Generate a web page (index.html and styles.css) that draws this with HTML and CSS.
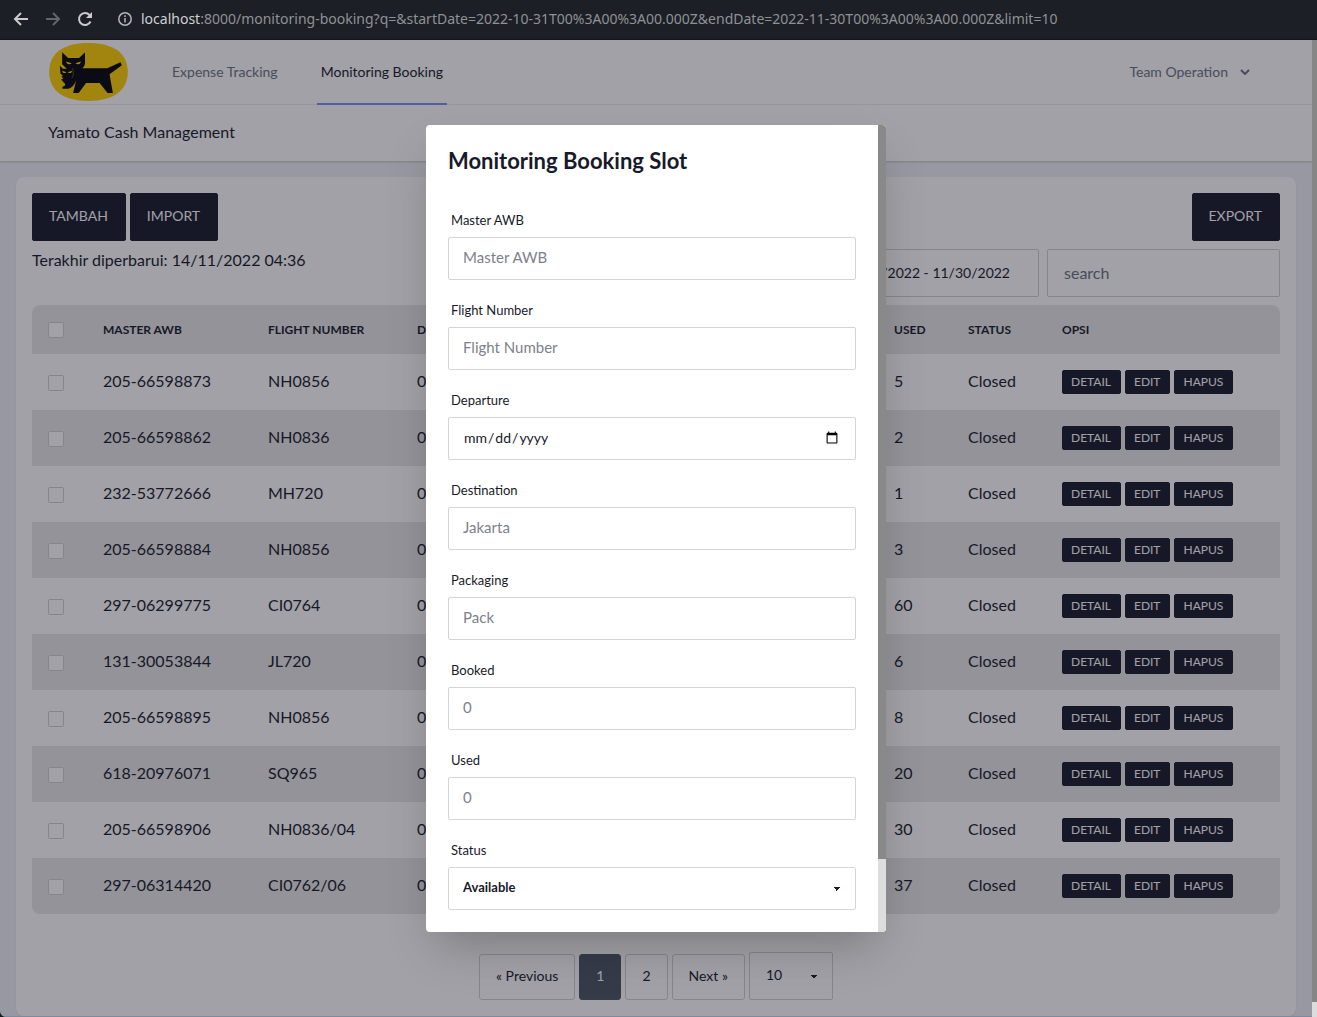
FILE: index.html
```html
<!DOCTYPE html>
<html lang="id">
<head>
<meta charset="utf-8">
<meta name="viewport" content="width=device-width, initial-scale=1">
<title>Monitoring Booking</title>
<link rel="stylesheet" href="styles.css">
</head>
<body>
<div class="browser-bar">
  <button class="browser-button" type="button" aria-label="Back"><svg width="16" height="16" viewBox="0 0 16 16"><path d="M15 8H2M8 2L2 8l6 6" fill="none" stroke="currentColor" stroke-width="2"/></svg></button>
  <button class="browser-button is-off" type="button" aria-label="Forward"><svg width="16" height="16" viewBox="0 0 16 16"><path d="M1 8h13M8 2l6 6-6 6" fill="none" stroke="currentColor" stroke-width="2"/></svg></button>
  <button class="browser-button" type="button" aria-label="Reload"><svg width="16" height="16" viewBox="0 0 16 16"><path d="M13.500 10.500A6 6 0 1 1 12.500 4" fill="none" stroke="currentColor" stroke-width="2"/><path d="M15 1v6H9z" fill="currentColor"/></svg></button>
  <div class="address">
    <svg width="14" height="14" viewBox="0 0 14 14"><circle cx="7" cy="7" r="6.200" fill="none" stroke="currentColor" stroke-width="1.500"/><path d="M7 6v4.500M7 3.300v1.600" stroke="currentColor" stroke-width="1.500"/></svg>
    <span><span class="address-host">localhost</span>:8000/monitoring-booking?q=&amp;startDate=2022-10-31T00%3A00%3A00.000Z&amp;endDate=2022-11-30T00%3A00%3A00.000Z&amp;limit=10</span>
  </div>
</div>

<div class="viewport">
  <div class="page">
    <header class="navbar">
      <a class="logo" href="#" aria-label="Yamato">
        <svg width="79" height="58" viewBox="147 128 237 175">
          <path d="M147 215C147 158 190 128 265 128S384 158 384 215S340 303 265 303S147 273 147 215Z" fill="#ffd100"/>
          <path d="M186 156L204 173H237L255 156V190Q254 201 247 204H322L362 186L366 195L329 222L339 279H323L299 249H258L236 279H219L228 242Q220 262 205 266H187V260Q196 259 195 252L183 238L190 235L184 230Q186 226 190 229L181 220L179 197L188 206H200L186 192Z" fill="#05060c"/>
          <path d="M197 184L215 189Q207 195 201 190ZM243 184L226 189Q234 195 240 190ZM186 212L199 216Q193 221 188 217ZM216 212L203 216Q209 221 214 217Z" fill="#ffd100"/>
          <path d="M218 204L220 224L215 234" fill="none" stroke="#ffd100" stroke-width="1"/>
        </svg>
      </a>
      <nav class="nav-links">
        <a class="nav-link" href="#">Expense Tracking</a>
        <a class="nav-link is-active" href="#" aria-current="page">Monitoring Booking</a>
      </nav>
      <button class="account" type="button">Team Operation
        <svg width="10" height="6" viewBox="0 0 10 6"><path d="M1 1l4 4 4-4" fill="none" stroke="currentColor" stroke-width="2"/></svg>
      </button>
    </header>
    <div class="page-heading">Yamato Cash Management</div>

    <main class="card">
      <div class="toolbar">
        <button class="button" type="button">TAMBAH</button>
        <button class="button" type="button">IMPORT</button>
        <button class="button push-right" type="button">EXPORT</button>
      </div>
      <div class="filters">
        <p class="updated">Terakhir diperbarui: 14/11/2022 04:36</p>
        <input class="filter date-range" type="text" aria-label="Date range" value="10/31/2022 - 11/30/2022">
        <input class="filter search" type="search" aria-label="Search" placeholder="search">
      </div>

      <table class="bookings">
        <colgroup><col class="col-check"><col class="col-awb"><col class="col-flight"><col><col class="col-used"><col class="col-status"><col class="col-actions"></colgroup>
        <thead>
          <tr><th><input type="checkbox" aria-label="Select all"></th><th>MASTER AWB</th><th>FLIGHT NUMBER</th><th>DEPARTURE</th><th>USED</th><th>STATUS</th><th>OPSI</th></tr>
        </thead>
        <tbody>
          <tr><td><input type="checkbox" aria-label="Select 205-66598873"></td><td>205-66598873</td><td>NH0856</td><td>0</td><td>5</td><td>Closed</td><td><div class="actions"><button type="button">DETAIL</button><button type="button">EDIT</button><button type="button">HAPUS</button></div></td></tr>
          <tr><td><input type="checkbox" aria-label="Select 205-66598862"></td><td>205-66598862</td><td>NH0836</td><td>0</td><td>2</td><td>Closed</td><td><div class="actions"><button type="button">DETAIL</button><button type="button">EDIT</button><button type="button">HAPUS</button></div></td></tr>
          <tr><td><input type="checkbox" aria-label="Select 232-53772666"></td><td>232-53772666</td><td>MH720</td><td>0</td><td>1</td><td>Closed</td><td><div class="actions"><button type="button">DETAIL</button><button type="button">EDIT</button><button type="button">HAPUS</button></div></td></tr>
          <tr><td><input type="checkbox" aria-label="Select 205-66598884"></td><td>205-66598884</td><td>NH0856</td><td>0</td><td>3</td><td>Closed</td><td><div class="actions"><button type="button">DETAIL</button><button type="button">EDIT</button><button type="button">HAPUS</button></div></td></tr>
          <tr><td><input type="checkbox" aria-label="Select 297-06299775"></td><td>297-06299775</td><td>CI0764</td><td>0</td><td>60</td><td>Closed</td><td><div class="actions"><button type="button">DETAIL</button><button type="button">EDIT</button><button type="button">HAPUS</button></div></td></tr>
          <tr><td><input type="checkbox" aria-label="Select 131-30053844"></td><td>131-30053844</td><td>JL720</td><td>0</td><td>6</td><td>Closed</td><td><div class="actions"><button type="button">DETAIL</button><button type="button">EDIT</button><button type="button">HAPUS</button></div></td></tr>
          <tr><td><input type="checkbox" aria-label="Select 205-66598895"></td><td>205-66598895</td><td>NH0856</td><td>0</td><td>8</td><td>Closed</td><td><div class="actions"><button type="button">DETAIL</button><button type="button">EDIT</button><button type="button">HAPUS</button></div></td></tr>
          <tr><td><input type="checkbox" aria-label="Select 618-20976071"></td><td>618-20976071</td><td>SQ965</td><td>0</td><td>20</td><td>Closed</td><td><div class="actions"><button type="button">DETAIL</button><button type="button">EDIT</button><button type="button">HAPUS</button></div></td></tr>
          <tr><td><input type="checkbox" aria-label="Select 205-66598906"></td><td>205-66598906</td><td>NH0836/04</td><td>0</td><td>30</td><td>Closed</td><td><div class="actions"><button type="button">DETAIL</button><button type="button">EDIT</button><button type="button">HAPUS</button></div></td></tr>
          <tr><td><input type="checkbox" aria-label="Select 297-06314420"></td><td>297-06314420</td><td>CI0762/06</td><td>0</td><td>37</td><td>Closed</td><td><div class="actions"><button type="button">DETAIL</button><button type="button">EDIT</button><button type="button">HAPUS</button></div></td></tr>
        </tbody>
      </table>

      <nav class="pagination" aria-label="Pagination">
        <a class="page-link" href="#">« Previous</a>
        <a class="page-link is-current" href="#" aria-current="page">1</a>
        <a class="page-link" href="#">2</a>
        <a class="page-link" href="#">Next »</a>
        <select class="select page-size" aria-label="Rows per page"><option>10</option></select>
      </nav>
    </main>

    <div class="overlay">
      <section class="modal" role="dialog" aria-modal="true" aria-labelledby="modal-title">
        <form class="modal-body">
          <h2 id="modal-title">Monitoring Booking Slot</h2>
          <div class="field"><label for="awb">Master AWB</label><input id="awb" type="text" placeholder="Master AWB"></div>
          <div class="field"><label for="flight">Flight Number</label><input id="flight" type="text" placeholder="Flight Number"></div>
          <div class="field"><label for="departure">Departure</label><input id="departure" type="date"></div>
          <div class="field"><label for="destination">Destination</label><input id="destination" type="text" placeholder="Jakarta"></div>
          <div class="field"><label for="packaging">Packaging</label><input id="packaging" type="text" placeholder="Pack"></div>
          <div class="field"><label for="booked">Booked</label><input id="booked" type="number" placeholder="0"></div>
          <div class="field"><label for="used">Used</label><input id="used" type="number" placeholder="0"></div>
          <div class="field"><label for="status">Status</label><select class="select" id="status"><option>Available</option></select></div>
        </form>
        <div class="modal-scroll"><div class="modal-thumb"></div></div>
      </section>
    </div>
  </div>
  <div class="page-scroll"><div class="page-thumb"></div></div>
</div>
</body>
</html>
```
FILE: styles.css
```css
*, *::before, *::after { box-sizing: border-box; }

body {
  margin: 0;
  min-height: 100vh;
  display: flex;
  flex-direction: column;
  background: #0d2018;
  color: #181a2a;
  font-family: Lato, "Open Sans", sans-serif;
  font-size: 16px;
  line-height: 24px;
}

a { color: inherit; text-decoration: none; }
p, h2 { margin: 0; }
button, input, select { font: inherit; color: inherit; margin: 0; }
button { cursor: pointer; }

/* Browser bar */
.browser-bar {
  height: 40px;
  flex: none;
  display: flex;
  align-items: center;
  gap: 16px;
  padding: 0 13px 2px;
  background: #1c1f26;
  border-bottom: 1px solid #14161b;
  color: #c9cbce;
}
.browser-button {
  display: flex;
  padding: 0;
  border: 0;
  background: none;
}
.browser-button.is-off { color: #62656b; }
.address {
  display: flex;
  align-items: center;
  gap: 9px;
  margin-left: 9px;
  color: #8f9295;
  font-family: "Noto Sans", sans-serif;
  font-size: 14px;
  white-space: nowrap;
}
.address svg { color: #b4b6b9; }
.address-host { color: #ced0d3; }

/* Page frame */
.viewport { flex: 1; display: flex; }
.page {
  position: relative;
  flex: 1;
  min-width: 0;
  background: #f0f0f7;
  border-bottom: 1px solid #7b8ba0;
  border-bottom-left-radius: 6px;
  overflow: hidden;
}
.page-scroll { width: 5px; background: #dcdcdc; }
.page-thumb { height: calc(100% - 15px); background: #868686; }

.navbar {
  height: 65px;
  display: flex;
  align-items: center;
  gap: 40px;
  padding: 0 62px 0 49px;
  background: #fff;
  border-bottom: 1px solid #f0f0f3;
}
.logo { display: flex; }
.nav-links {
  flex: 1;
  align-self: stretch;
  display: flex;
  gap: 35px;
  margin-bottom: -1px;
  font-size: 14px;
}
.nav-link {
  display: flex;
  align-items: center;
  padding: 0 4px;
  border-bottom: 2px solid transparent;
  color: #6b7280;
}
.nav-link.is-active { color: #181a2a; border-color: #818cf8; }
.account {
  display: flex;
  align-items: center;
  gap: 12px;
  padding: 0 0 1px;
  border: 0;
  background: none;
  color: #6b7280;
  font-size: 14px;
}
.page-heading {
  padding: 15px 48px 17px;
  background: #fff;
  box-shadow: 0 1px 2px rgba(0, 0, 0, .2);
}

.card {
  margin: 16px 16px 0;
  padding: 16px;
  background: #fff;
  border-radius: 8px;
  box-shadow: 0 1px 2px rgba(0, 0, 0, .06);
}
.toolbar { display: flex; gap: 4px; }
.button {
  height: 48px;
  padding: 0 17px 2px 16px;
  border: 1px solid #181a2a;
  border-radius: 2px;
  background: #181a2a;
  color: #fff;
  font-size: 14px;
}
.push-right { margin-left: auto; }
.filters {
  display: flex;
  gap: 8px;
  margin: 8px 0;
}
.updated {
  flex: 1;
  line-height: 22px;
}
.filter {
  height: 48px;
  padding: 0 16px 2px;
  border: 1px solid #d1d1d4;
  border-radius: 2px;
  background: #fff;
}
.filter::placeholder { color: #6b7280; }
.date-range {
  width: 220px;
  padding-right: 28px;
  font-size: 14px;
  text-align: right;
}
.search { width: 233px; }

/* Table */
.bookings {
  width: 100%;
  table-layout: fixed;
  border-collapse: separate;
  border-spacing: 0;
  border-radius: 8px;
  overflow: hidden;
}
.col-check { width: 55px; }
.col-awb { width: 165px; }
.col-flight { width: 149px; }
.col-used { width: 74px; }
.col-status { width: 94px; }
.col-actions { width: 234px; }
.bookings th, .bookings td {
  padding: 0 16px;
  text-align: left;
  white-space: nowrap;
}
.bookings th {
  height: 49px;
  background: #e8e8e8;
  font-size: 12px;
}
.bookings td {
  height: 56px;
  padding-bottom: 2px;
}
.bookings td:last-child { padding-bottom: 0; }
.bookings tbody tr:nth-child(even) { background: #e8e8e8; }
.bookings input {
  appearance: none;
  display: block;
  width: 16px;
  height: 16px;
  border: 1px solid #d1d1d4;
  border-radius: 2px;
  background: #fff;
}
.bookings td input { margin-top: 4px; }
.actions { display: flex; gap: 4px; }
.actions button {
  height: 24px;
  padding: 0 9px 1px 8px;
  border: 1px solid #181a2a;
  border-radius: 2px;
  background: #181a2a;
  color: #fff;
  font-size: 12px;
  line-height: 16px;
}

/* Pagination */
.pagination {
  display: flex;
  justify-content: center;
  align-items: flex-end;
  gap: 4px;
  margin-top: 38px;
  font-size: 14px;
}
.page-link {
  height: 46px;
  padding: 9px 16px;
  border: 1px solid #d1d1d4;
  border-radius: 3px;
}
.page-link.is-current {
  background: #4b5563;
  border-color: #4b5563;
  color: #fff;
}
.select {
  appearance: none;
  border: 1px solid #d1d1d4;
  border-radius: 2px;
  background-color: #fff;
  background-image:
    linear-gradient(45deg, transparent 50%, currentColor 50%),
    linear-gradient(135deg, currentColor 50%, transparent 50%);
  background-position: right 18px top 52%, right 14px top 52%;
  background-size: 4px 4px;
  background-repeat: no-repeat;
}
.page-size {
  width: 84px;
  height: 48px;
  padding: 0 16px 2px;
}

/* Modal */
.overlay {
  position: absolute;
  inset: 0;
  display: grid;
  place-items: center;
  background: rgba(19, 21, 34, .4);
}
.modal {
  width: 460px;
  max-width: 90%;
  height: calc(100% - 169px);
  display: flex;
  overflow: hidden;
  border-radius: 4px;
  background: #fff;
  box-shadow: 0 22px 45px -11px rgba(0, 0, 0, .25);
}
.modal-body {
  flex: 1;
  padding: 22px;
}
.modal h2 {
  margin-bottom: 28px;
  font-size: 22px;
  line-height: 28px;
}
.field {
  display: flex;
  flex-direction: column;
  margin-bottom: 13px;
}
.field label {
  padding: 5px 3px;
  font-size: 13px;
}
.field input, .field .select {
  width: 100%;
  height: 43px;
  padding: 0 14px 2px;
  border: 1px solid #d5d5d8;
  border-radius: 2px;
  background-color: #fff;
  font-size: 15px;
}
.field input[type="date"] {
  padding-bottom: 0;
  font-size: 14px;
}
.field input::placeholder { color: #7d818c; }
.field .select { font-size: 13px; font-weight: 700; }
.modal-scroll { width: 8px; background: #ddd; }
.modal-thumb { height: 91%; background: #898989; }
```
